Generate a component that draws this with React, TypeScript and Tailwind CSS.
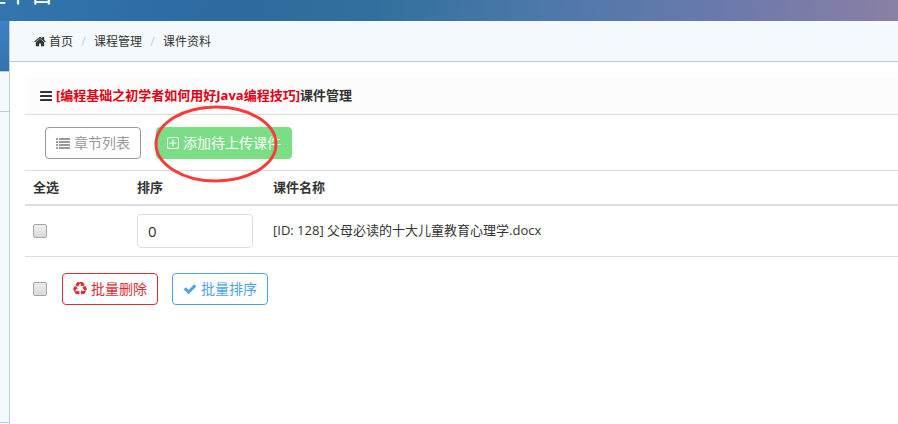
import { useState } from 'react';
import type { ReactNode } from 'react';

type Courseware = { id: number; name: string; order: number };

const items: Courseware[] = [{ id: 128, name: '父母必读的十大儿童教育心理学.docx', order: 0 }];

const crumbs = ['首页', '课程管理', '课件资料'];

function Icon({
  className = 'size-[14px]',
  viewBox = '0 0 1792 1792',
  children,
}: {
  className?: string;
  viewBox?: string;
  children: ReactNode;
}) {
  return (
    <svg viewBox={viewBox} fill="currentColor" aria-hidden="true" className={`shrink-0 ${className}`}>
      {children}
    </svg>
  );
}

function HomeIcon() {
  return (
    <Icon className="size-3" viewBox="64 128 1664 1664">
      <path d="M1472 992v480q0 26-19 45t-45 19h-384v-384h-256v384h-384q-26 0-45-19t-19-45v-480q0-1 .5-3t.5-3l575-474 575 474q1 2 1 6zm223-69l-62 74q-8 9-21 11h-3q-13 0-21-7l-692-577-692 577q-12 8-24 7-13-2-21-11l-62-74q-8-10-7-23.5t11-21.5l719-599q32-26 76-26t76 26l244 204v-195q0-14 9-23t23-9h192q14 0 23 9t9 23v408l219 182q10 8 11 21.5t-7 23.5z" />
    </Icon>
  );
}

function BarsIcon() {
  return (
    <Icon className="h-[14px] w-3" viewBox="128 0 1536 1792">
      <rect x="128" y="256" width="1536" height="256" rx="48" />
      <rect x="128" y="768" width="1536" height="256" rx="48" />
      <rect x="128" y="1280" width="1536" height="256" rx="48" />
    </Icon>
  );
}

function ListIcon() {
  return (
    <Icon>
      {[256, 640, 1024, 1408].map((y) => (
        <g key={y}>
          <rect x="0" y={y} width="256" height="256" rx="32" />
          <rect x="384" y={y} width="1408" height="256" rx="32" />
        </g>
      ))}
    </Icon>
  );
}

function PlusSquareIcon() {
  return (
    <Icon className="h-[14px] w-3" viewBox="128 0 1536 1792">
      <rect x="192" y="192" width="1408" height="1408" rx="224" fill="none" stroke="currentColor" strokeWidth="144" />
      <path d="M824 448h144v376h376v144H968v376H824V968H448V824h376z" />
    </Icon>
  );
}

function RecycleIcon() {
  return (
    <Icon>
      <path d="M836 1169l-15 368-2 22-420-29q-36-3-67-31.5t-47-65.5q-11-27-14.5-55t4-65 12-55 21.5-64 19-53q78 12 509 28zm-387-586l180 379-147-92q-63 72-111.5 144.5t-72.5 125-39.5 94.5-18.5 63l-4 21-190-357q-17-26-18-56t6-47l8-18q35-63 114-188l-140-86zm1231 517l-188 359q-12 29-36.5 46.5t-43.5 20.5l-18 4q-71 7-219 12l8 164-230-367 211-362 7 173q170 16 283 5t170-33zm-785-924q-47 63-265 435l-317-187-19-12 225-356q20-31 60-45t80-10q24 2 48.5 12t42 21 41.5 33 36 34.5 36 39.5 32 35zm655 307l212 363q18 37 12.5 76t-27.5 74q-13 20-33 37t-38 28-48.5 22-47 16-51.5 14-46 12q-34-72-265-436l313-195zm-143-226l142-83-220 373-419-20 151-86q-34-89-75-166t-75.5-123.5-64.5-80-47-46.5l-17-13 405 1q31-3 58 10.5t39 28.5l11 15q39 61 112 190z" />
    </Icon>
  );
}

function CheckIcon() {
  return (
    <Icon>
      <path d="M1671 566q0 40-28 68l-724 724-136 136q-28 28-68 28t-68-28l-136-136-362-362q-28-28-28-68t28-68l136-136q28-28 68-28t68 28l294 295 656-657q28-28 68-28t68 28l136 136q28 28 28 68z" />
    </Icon>
  );
}

function Checkbox({ label, checked, onChange }: { label: string; checked: boolean; onChange: () => void }) {
  return (
    <input
      type="checkbox"
      aria-label={label}
      checked={checked}
      onChange={onChange}
      className="block size-[14px] shrink-0 appearance-none rounded-xs border border-[#a5a5a5] bg-linear-to-b from-[#eeeeee] to-[#dadada] checked:bg-[#4aa3f0]"
    />
  );
}

const btn = 'flex h-8 cursor-pointer items-center gap-1 rounded border px-[10px] text-sm';

export default function App() {
  const [selected, setSelected] = useState<number[]>([]);
  const allSelected = selected.length === items.length;

  const toggle = (id: number) =>
    setSelected((s) => (s.includes(id) ? s.filter((x) => x !== id) : [...s, id]));
  const toggleAll = () => setSelected(allSelected ? [] : items.map((i) => i.id));

  return (
    <div className="flex min-h-screen flex-col overflow-hidden bg-white font-['Open_Sans','Noto_Sans_CJK_SC',sans-serif] text-[13px] text-[#333]">
      <header className="flex h-[21px] items-end overflow-hidden bg-[linear-gradient(100deg,#3375ae_0%,#2c6a9f_25%,#31709e_42%,#4c78a9_60%,#6a79ac_80%,#8b80a4_100%)]">
        <h1 className="-ml-[18px] pb-4 text-2xl leading-6 whitespace-nowrap text-white">理平台</h1>
      </header>

      <div className="flex grow">
        <aside className="flex w-[10px] shrink-0 flex-col border-r border-[#b9cfda] bg-[#f3f9fd]">
          <div className="h-[50px] bg-linear-to-b from-[#3f82c2] to-[#3273ae]" />
          <div className="h-[41px] border-y border-[#b9cfda]" />
          <div className="mb-px grow border-b border-[#b9cfda]" />
        </aside>

        <main className="min-w-0 grow">
          <nav className="flex h-[41px] items-center border-b border-[#b9cbd8] bg-[#f3f9fd] pt-px pl-6 text-xs">
            {crumbs.map((c, i) => (
              <div key={c} className="flex items-center">
                {i > 0 && <span className="w-[21px] text-center text-[#ccc]">/</span>}
                <a href="#" className="flex items-center gap-[3px]">
                  {i === 0 && <HomeIcon />}
                  {c}
                </a>
              </div>
            ))}
          </nav>

          <section className="mt-[15px] ml-[15px]">
            <h2 className="flex h-[38px] items-center gap-1 border-b border-[#ddd] bg-[#fcfcfc] pl-[15px] font-bold">
              <BarsIcon />
              <span>
                <span className="text-[#e60012]">[编程基础之初学者如何用好Java编程技巧]</span>课件管理
              </span>
            </h2>

            <div className="flex gap-[15px] px-5 pt-3 pb-[11px]">
              <button type="button" className={`${btn} border-[#999] text-[#999]`}>
                <ListIcon />
                章节列表
              </button>
              <div className="relative">
                <button type="button" className={`${btn} border-[#79de84] bg-[#79de84] text-white`}>
                  <PlusSquareIcon />
                  添加待上传课件
                </button>
                <svg
                  viewBox="0 0 124 78"
                  aria-hidden="true"
                  className="pointer-events-none absolute -top-[22px] -left-[2px] h-[78px] w-[124px]"
                >
                  <ellipse cx="62" cy="39" rx="60" ry="37" fill="none" stroke="#f93c3a" strokeWidth="3" />
                </svg>
              </div>
            </div>

            <table className="w-full table-fixed border-separate border-spacing-0 border-t border-[#ddd] text-left">
              <thead>
                <tr className="h-[35px]">
                  <th className="w-[104px] border-b-2 border-[#ddd] px-2 font-bold">全选</th>
                  <th className="w-[136px] border-b-2 border-[#ddd] px-2 font-bold">排序</th>
                  <th className="border-b-2 border-[#ddd] px-2 font-bold">课件名称</th>
                </tr>
              </thead>
              <tbody>
                {items.map((item) => (
                  <tr key={item.id}>
                    <td className="border-b border-[#ddd] p-2">
                      <Checkbox label={item.name} checked={selected.includes(item.id)} onChange={() => toggle(item.id)} />
                    </td>
                    <td className="border-b border-[#ddd] p-2">
                      <input
                        type="text"
                        aria-label="排序"
                        defaultValue={item.order}
                        className="block h-[34px] w-[116px] rounded-sm border border-[#ddd] px-[10px] text-[15px]"
                      />
                    </td>
                    <td className="border-b border-[#ddd] p-2">
                      [ID: {item.id}] {item.name}
                    </td>
                  </tr>
                ))}
              </tbody>
            </table>

            <div className="flex items-center px-2 py-4">
              <Checkbox label="全选" checked={allSelected} onChange={toggleAll} />
              <button type="button" className={`${btn} ml-[15px] border-[#dd2d33] text-[#dd2d33]`}>
                <RecycleIcon />
                批量删除
              </button>
              <button type="button" className={`${btn} ml-[14px] border-[#4aa3f0] text-[#4aa3f0]`}>
                <CheckIcon />
                批量排序
              </button>
            </div>
          </section>
        </main>
      </div>
    </div>
  );
}
